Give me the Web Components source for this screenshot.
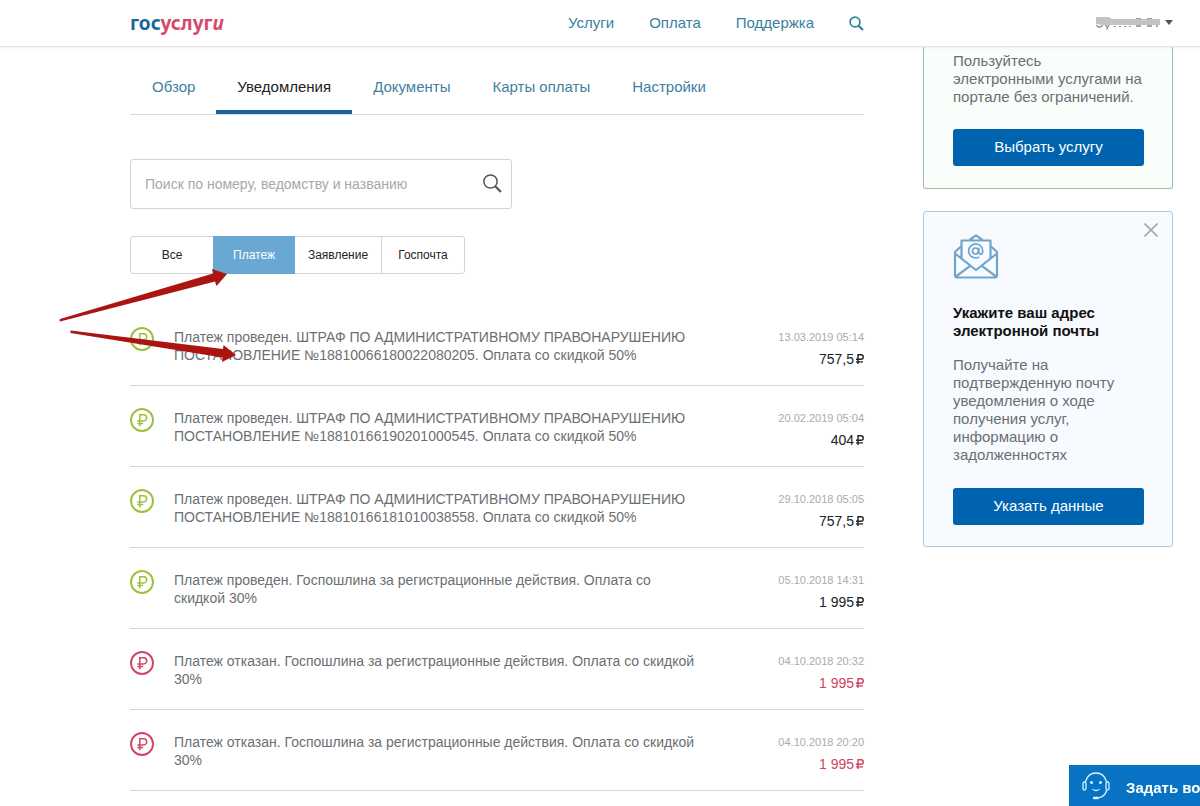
<!DOCTYPE html>
<html lang="ru">
<head>
<meta charset="utf-8">
<meta name="viewport" content="width=device-width, initial-scale=1">
<title>Госуслуги — Уведомления</title>
<style>
body{margin:0;font:14px/18px "Liberation Sans",Arial,sans-serif;color:#6b6f73;background:#fff}
</style>
</head>
<body>
<gu-page></gu-page>
<script>
const define = (name, html, setup) => customElements.define(name, class extends HTMLElement {
  connectedCallback() {
    if (this.shadowRoot) return;
    const t = document.createElement('template');
    t.innerHTML = '<style>*{box-sizing:border-box}a{text-decoration:none;color:inherit}button{font:inherit;cursor:pointer;margin:0}svg{display:block}</style>' + html;
    this.attachShadow({ mode: 'open' }).append(t.content.cloneNode(true));
    if (setup) setup(this, this.shadowRoot);
  }
});

define('gu-header', `
<style>
:host{display:block;position:sticky;top:0;z-index:2;background:#fff;border-bottom:1px solid #e6e6e6;box-shadow:0 1px 2px rgba(0,0,0,.06)}
.bar{display:grid;grid-template-columns:minmax(0,1fr) 250px;gap:59px;padding:0 27px 0 130px;height:46px;align-items:center}
.left{display:flex;justify-content:space-between;align-items:center}
.logo{font:bold 19px/24px "Noto Sans","Open Sans",sans-serif;color:#17679b}
.logo span{color:#d8486a}
.logo i{font-style:italic}
nav{display:flex;align-items:center;gap:35px;font-size:15px;color:#37819f}
button{border:0;background:none;padding:0;color:inherit}
.user{justify-self:end;display:flex;align-items:center;gap:4px}
</style>
<div class="bar">
  <div class="left">
    <a class="logo" href="#">гос<span>услуг<i>и</i></span></a>
    <nav>
      <a href="#">Услуги</a><a href="#">Оплата</a><a href="#">Поддержка</a>
      <button aria-label="Поиск"><svg width="15" height="16" viewBox="0 0 15 16" fill="none" stroke="currentColor" stroke-width="1.8"><circle cx="6" cy="7" r="4.9"/><path d="M9.5 10.6 14 15" stroke-width="2.2"/></svg></button>
    </nav>
  </div>
  <button class="user" aria-label="Меню пользователя">
    <svg width="66" height="16" viewBox="0 0 66 16"><path d="M1.500 10c1 3 5 3 6 0M10 9l2.500 4M15 8l-3.500 6.500M41 4h5M41 11h5M52 4h5M52 11h5M61 11h2" fill="none" stroke="#8b8b8b" stroke-width="1.300"/><path d="M19 11.500h17" stroke="#999" stroke-dasharray="2 3"/><path d="M1 2h13l3 2h48v6H8L1 9z" fill="#c3c3c3"/><path d="M41 3.500h5M52 3.500h5" stroke="#9a9a9a"/></svg>
    <svg width="8" height="6" viewBox="0 0 8 6"><path d="M0 0h8L4 5z" fill="#555"/></svg>
  </button>
</div>`);

define('gu-tabs', `
<style>
:host{display:block}
nav{display:flex;border-bottom:1px solid #d6dadc;font-size:15px;line-height:20px;color:#3f7f9f;padding-left:1px}
a{padding:30px 21px 13px;border-bottom:4px solid transparent}
a[aria-current]{color:#222;border-color:#1562a0}
</style>
<nav><a href="#">Обзор</a><a href="#" aria-current="page">Уведомления</a><a href="#">Документы</a><a href="#">Карты оплаты</a><a href="#">Настройки</a></nav>`);

define('gu-search', `
<style>
:host{display:block;max-width:382px}
form{display:flex;align-items:center;height:50px;border:1px solid #d0d4d6;border-radius:3px;padding:0 9px 0 14px}
input{flex:1;min-width:0;border:0;outline:0;background:none;font:inherit;color:#333;padding:0}
input::placeholder{color:#a6a8aa;opacity:1}
button{border:0;background:none;padding:0;color:#555}
</style>
<form role="search"><input type="text" aria-label="Поиск по номеру, ведомству и названию" placeholder="Поиск по номеру, ведомству и названию">
<button type="button" aria-label="Найти"><svg width="20" height="20" viewBox="0 0 20 20" fill="none" stroke="currentColor"><circle cx="8.500" cy="7.500" r="6.600" stroke-width="1.500"/><path d="M13 12 19 18" stroke-width="2.200"/></svg></button></form>`);

define('gu-filter', `
<style>
:host{display:block}
div{display:inline-flex;height:38px;border:1px solid #d0d4d6;border-radius:3px;vertical-align:top}
button{font-size:12px;line-height:16px;padding:0;width:82px;border:0;background:none;color:#222}
button:nth-child(3){width:87px;border-right:1px solid #d0d4d6}
button[aria-pressed=true]{background:#69a8d2;color:#fff;margin:-1px 0}
</style>
<div role="group"><button>Все</button><button aria-pressed="true">Платеж</button><button>Заявление</button><button>Госпочта</button></div>`);

define('gu-payment', `
<style>
:host{display:grid;grid-template-columns:24px minmax(0,1fr) auto;column-gap:20px;padding:22px 0 17px;border-bottom:1px solid #d2d5d7;--mark:#9dc03c;--sum:#222}
:host([failed]){--mark:#cf4563;--sum:#d0415f}
.mark{color:var(--mark)}
p{margin:0;padding-top:1px;max-width:524px}
.side{display:flex;flex-direction:column;align-items:flex-end;gap:4px;padding-top:1px}
time{font-size:11px;color:#a9abad}
.sum{display:flex;align-items:baseline;gap:2px;color:var(--sum)}
</style>
<svg class="mark" width="24" height="24" viewBox="0 0 24 24" fill="none" stroke="currentColor"><circle cx="12" cy="12" r="11" stroke-width="1.900"/><path d="M9.800 18.200V6.800h3.800a3.100 3.100 0 0 1 0 6.200H7.300M7.300 15.500h5.900" stroke-width="1.500"/></svg>
<p><slot></slot></p>
<div class="side"><time></time><span class="sum"><span class="n"></span><svg width="8" height="10" viewBox="0 0 8 10" fill="none" stroke="currentColor" stroke-width="1.400"><path d="M2 10V.8h3a2.200 2.200 0 0 1 0 4.500H0M0 7.900h7"/></svg></span></div>`,
(el, root) => {
  root.querySelector('time').textContent = el.getAttribute('date');
  root.querySelector('.n').textContent = el.getAttribute('sum');
});

define('gu-card', `
<style>
:host{display:block;position:relative;border:1px solid #b3c9d3;border-radius:3px;background:#f7fbff;padding:22px 28px 21px 29px;font-size:15px}
:host([tone=green]){border-color:#a3bfa0;border-top:0;border-radius:0 0 3px 3px;background:#f9fefa;padding:5px 28px 22px 29px}
button.go{display:block;width:100%;height:37px;border:0;border-radius:3px;background:#0063b0;color:#fff;font-size:15px;padding:0 0 2px}
</style>
<slot></slot><button class="go"></button>`,
(el, root) => { root.querySelector('.go').textContent = el.getAttribute('action'); });

define('gu-mail-icon', `
<style>:host{display:block}</style>
<svg width="46" height="45" viewBox="0 0 46 45" fill="none" stroke="#70a5c9" stroke-width="2.200" stroke-linejoin="round">
<path d="M8 12.500 2 18v23q0 2.500 2.500 2.500h37q2.500 0 2.500-2.500V18l-6-5.500"/>
<path d="M8.500 24V6.500h29V24M16.500 6 23 1.300 29.500 6"/><path d="M2 19.500 23 36 44 19.500M3 42.500 17.500 31.700M43 42.500 28.500 31.700"/>
<g stroke-width="1.700"><circle cx="22.500" cy="17" r="3"/><path d="M25.700 13.700V18q.2 2.300 2 2.200 2-.3 2-3.500a7 7 0 1 0-3.500 6.300"/></g></svg>`);

define('gu-chat', `
<style>
:host{display:block;position:fixed;right:0;bottom:0;z-index:3}
button{display:flex;align-items:center;gap:16px;width:131px;height:41px;padding:0 0 0 13px;border:0;background:#0873c4;color:#fff;font-weight:bold;font-size:15px;white-space:nowrap}
svg{flex:none}span{padding-top:4px}
</style>
<button><svg width="28" height="28" viewBox="0 0 28 28" fill="none" stroke="#d8f1ff" stroke-width="1.300" stroke-linecap="round"><path d="M3.500 9.500C5 4.500 9 1 14 1s9 3.500 10.500 8.500M24.500 18.500c-1 4-4 6.500-8 7.300"/><rect x="1" y="10" width="3" height="8" rx="1.500"/><rect x="24" y="10" width="3" height="8" rx="1.500"/><path d="M11 17.500q3 2 6 0"/><path d="M12 26h3.500" stroke-width="2.400"/><g fill="#d8f1ff" stroke="none"><circle cx="9.500" cy="10.500" r="1.500"/><circle cx="18.500" cy="10.500" r="1.500"/></g></svg><span>Задать во</span></button>`);

define('gu-arrows', `
<style>:host{display:block;position:absolute;left:58px;top:266px;z-index:1;pointer-events:none}</style>
<svg width="182" height="100" viewBox="58 266 182 100" fill="#ab1411"><path d="M60 319 213 273.500 212 269 227 274 216.500 286 215 281.500 60 321.500Q59 320 60 319Z"/><path d="M70.500 330.500 223 349 223.500 345 236 355 222 362 222.500 357.500 70.500 333Z"/></svg>`);

define('gu-page', `
<style>
:host{display:block;position:relative;min-height:100vh}
.cols{display:grid;grid-template-columns:minmax(0,1fr) 250px;gap:59px;padding:0 27px 0 130px;align-items:start}
gu-search{margin-top:44px}gu-filter{margin-top:27px}
.list{margin-top:31px}
aside{display:flex;flex-direction:column;gap:22px}
p,h2{margin:0}
aside p{margin-bottom:24px}
gu-card[tone] p{margin-bottom:23px}
h2{font-size:15px;line-height:18px;color:#111;margin:25px 0 16px}
.close{position:absolute;top:11px;right:14px;border:0;background:none;padding:0}
</style>
<gu-header></gu-header>
<div class="cols">
  <main>
    <gu-tabs></gu-tabs><gu-search></gu-search><gu-filter></gu-filter>
    <div class="list">
      <gu-payment date="13.03.2019 05:14" sum="757,5">Платеж проведен. ШТРАФ ПО АДМИНИСТРАТИВНОМУ ПРАВОНАРУШЕНИЮ ПОСТАНОВЛЕНИЕ №18810066180022080205. Оплата со скидкой 50%</gu-payment>
      <gu-payment date="20.02.2019 05:04" sum="404">Платеж проведен. ШТРАФ ПО АДМИНИСТРАТИВНОМУ ПРАВОНАРУШЕНИЮ ПОСТАНОВЛЕНИЕ №18810166190201000545. Оплата со скидкой 50%</gu-payment>
      <gu-payment date="29.10.2018 05:05" sum="757,5">Платеж проведен. ШТРАФ ПО АДМИНИСТРАТИВНОМУ ПРАВОНАРУШЕНИЮ ПОСТАНОВЛЕНИЕ №18810166181010038558. Оплата со скидкой 50%</gu-payment>
      <gu-payment date="05.10.2018 14:31" sum="1 995">Платеж проведен. Госпошлина за регистрационные действия. Оплата со скидкой 30%</gu-payment>
      <gu-payment failed date="04.10.2018 20:32" sum="1 995">Платеж отказан. Госпошлина за регистрационные действия. Оплата со скидкой 30%</gu-payment>
      <gu-payment failed date="04.10.2018 20:20" sum="1 995">Платеж отказан. Госпошлина за регистрационные действия. Оплата со скидкой 30%</gu-payment>
    </div>
  </main>
  <aside>
    <gu-card tone="green" action="Выбрать услугу"><p>Пользуйтесь электронными услугами на портале без ограничений.</p></gu-card>
    <gu-card action="Указать данные">
      <button class="close" aria-label="Закрыть"><svg width="14" height="14" viewBox="0 0 14 14" stroke="#a3a9ad" stroke-width="1.600"><path d="M.5.5l13 13M13.500.5l-13 13"/></svg></button>
      <gu-mail-icon></gu-mail-icon>
      <h2>Укажите ваш адрес электронной почты</h2>
      <p>Получайте на подтвержденную почту уведомления о ходе получения услуг, информацию о задолженностях</p>
    </gu-card>
  </aside>
</div>
<gu-arrows></gu-arrows>
<gu-chat></gu-chat>`);
</script>
</body>
</html>
